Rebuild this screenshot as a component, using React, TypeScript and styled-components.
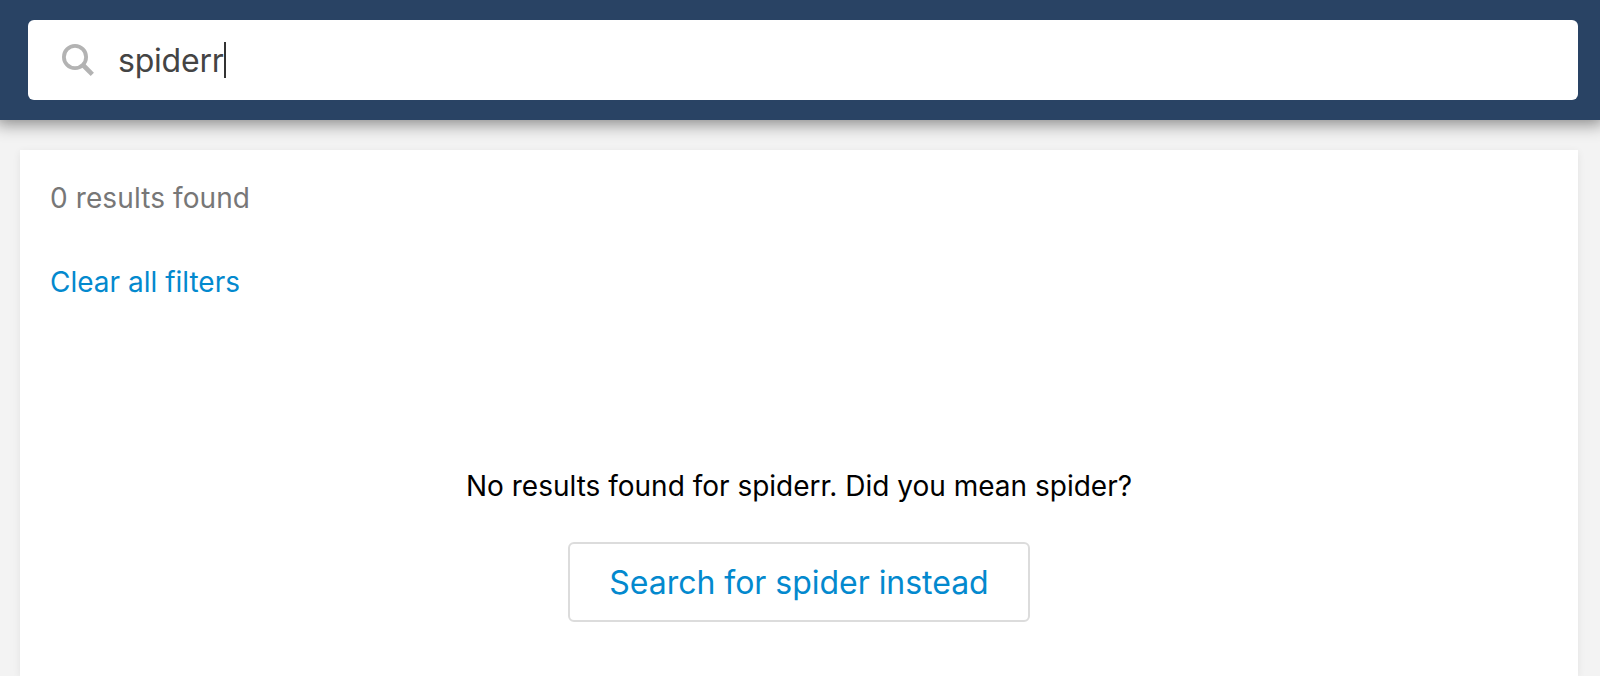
import React from "react";
import styled, { createGlobalStyle } from "styled-components";

const GlobalStyle = createGlobalStyle`
  * {
    box-sizing: border-box;
  }
  body {
    margin: 0;
    background: #f3f3f3;
    font-family: Inter, "Liberation Sans", sans-serif;
    overflow: hidden;
  }
`;

const Page = styled.div`
  display: flex;
  flex-direction: column;
  height: 100vh;
`;

const Header = styled.header`
  flex: none;
  height: 120px;
  padding: 20px 22px 20px 28px;
  background: #294364;
  box-shadow: 0 0 16px 4px rgba(0, 0, 0, 0.45);
`;

const SearchBox = styled.div`
  display: flex;
  align-items: center;
  height: 80px;
  padding-left: 34px;
  border-radius: 6px;
  background: #fff;
`;

const SearchIcon = styled.svg`
  flex: none;
  width: 32px;
  height: 32px;
  margin-right: 24px;
  margin-bottom: 1px;
`;

const Query = styled.span`
  width: 106px;
  padding-top: 2px;
  font-size: 32px;
  line-height: 40px;
  letter-spacing: -0.22px;
  color: #444;
`;

const Caret = styled.span`
  width: 2px;
  height: 36px;
  background: #333;
`;

const Results = styled.main`
  flex: 1;
  display: flex;
  flex-direction: column;
  align-items: flex-start;
  margin: 30px 22px 0 20px;
  padding: 28px 30px 0;
  background: #fff;
  box-shadow: 0 2px 8px rgba(0, 0, 0, 0.07);
`;

const Count = styled.p`
  margin: 0 0 44px;
  font-size: 28px;
  line-height: 40px;
  letter-spacing: 0.1px;
  color: #777;
`;

const ClearLink = styled.a`
  font-size: 28px;
  line-height: 40px;
  color: #0389ce;
  text-decoration: none;
  cursor: pointer;
`;

const EmptyState = styled.section`
  align-self: stretch;
  display: flex;
  flex-direction: column;
  align-items: center;
  margin-top: 164px;
`;

const Message = styled.p`
  margin: 0 0 36px;
  font-size: 28px;
  line-height: 40px;
  color: #000;
`;

const SuggestButton = styled.button`
  width: 462px;
  height: 80px;
  padding: 2px 0 0;
  border: 2px solid #dcdcdc;
  border-radius: 6px;
  background: #fff;
  font-family: inherit;
  font-size: 32px;
  line-height: 40px;
  letter-spacing: -0.03px;
  color: #0389ce;
  cursor: pointer;
`;

export default function App() {
  return (
    <Page>
      <GlobalStyle />
      <Header>
        <SearchBox>
          <SearchIcon viewBox="0 0 32 32" fill="none" stroke="#b3b3b3">
            <circle cx="13" cy="13" r="11.1" strokeWidth="3.8" />
            <path d="M20.5 20.5 L30.3 30.3" strokeWidth="4.6" />
          </SearchIcon>
          <Query>spiderr</Query>
          <Caret />
        </SearchBox>
      </Header>
      <Results>
        <Count>0 results found</Count>
        <ClearLink>Clear all filters</ClearLink>
        <EmptyState>
          <Message>No results found for spiderr. Did you mean spider?</Message>
          <SuggestButton>Search for spider instead</SuggestButton>
        </EmptyState>
      </Results>
    </Page>
  );
}
